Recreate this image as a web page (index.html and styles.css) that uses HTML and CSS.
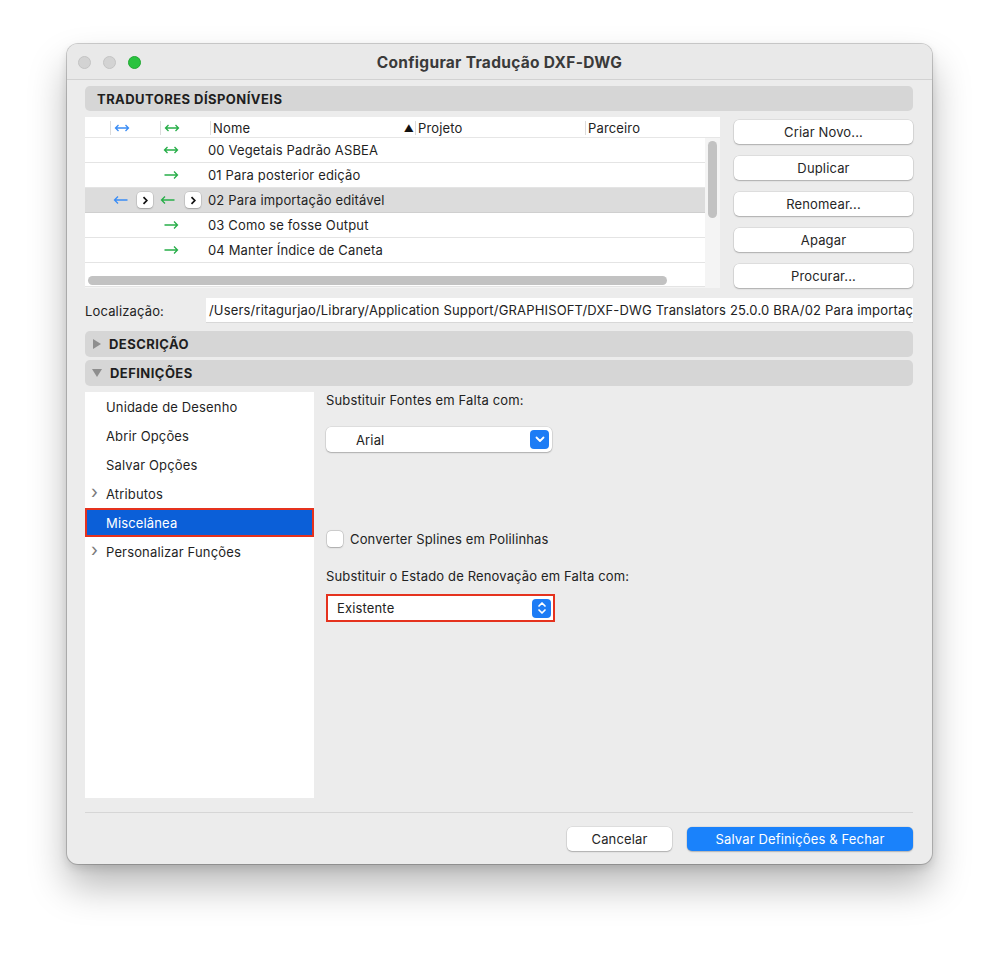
FILE: index.html
```html
<!DOCTYPE html>
<html lang="pt">
<head>
<meta charset="utf-8">
<title>Configurar Tradução DXF-DWG</title>
<link rel="stylesheet" href="styles.css">
</head>
<body>
<div class="window">
  <div class="titlebar">
    <div class="lights">
      <span class="light grey"></span>
      <span class="light grey"></span>
      <span class="light green"></span>
    </div>
    <div class="title">Configurar Tradução DXF-DWG</div>
  </div>
  <div class="content">
    <div class="bar"><span class="bar-text">TRADUTORES DÍSPONÍVEIS</span></div>

    <div class="translators">
      <div class="table">
        <div class="thead">
          <div class="th"></div>
          <div class="th"><span class="sep"></span>
            <svg class="arr" width="16" height="10" viewBox="0 0 16 10"><path d="M1.5 5H14.5M4.5 2L1.5 5L4.5 8M11.5 2L14.5 5L11.5 8" stroke="#3a8cf5" stroke-width="1.3" fill="none"/></svg>
          </div>
          <div class="th"><span class="sep"></span>
            <svg class="arr" width="16" height="10" viewBox="0 0 16 10"><path d="M1.5 5H14.5M4.5 2L1.5 5L4.5 8M11.5 2L14.5 5L11.5 8" stroke="#27ae48" stroke-width="1.3" fill="none"/></svg>
          </div>
          <div class="th th-name"><span class="sep"></span><span class="lbl">Nome</span><span class="sort">▲</span></div>
          <div class="th"><span class="sep"></span><span class="lbl">Projeto</span></div>
          <div class="th"><span class="sep"></span><span class="lbl">Parceiro</span></div>
        </div>

        <div class="row">
          <div></div><div></div>
          <div class="cell"><svg class="arr" width="16" height="10" viewBox="0 0 16 10"><path d="M1.5 5H14.5M4.5 2L1.5 5L4.5 8M11.5 2L14.5 5L11.5 8" stroke="#27ae48" stroke-width="1.3" fill="none"/></svg></div>
          <div class="name">00 Vegetais Padrão ASBEA</div><div></div><div></div>
        </div>
        <div class="row">
          <div></div><div></div>
          <div class="cell"><svg class="arr" width="16" height="10" viewBox="0 0 16 10"><path d="M1.5 5H14.5M11 1.5L14.5 5L11 8.5" stroke="#27ae48" stroke-width="1.3" fill="none"/></svg></div>
          <div class="name">01 Para posterior edição</div><div></div><div></div>
        </div>
        <div class="row selected">
          <div></div>
          <div class="cell"><svg class="arr" width="16" height="10" viewBox="0 0 16 10"><path d="M14.5 5H1.5M5 1.5L1.5 5L5 8.5" stroke="#3a8cf5" stroke-width="1.3" fill="none"/></svg><span class="chev">
            <svg width="8" height="9" viewBox="0 0 8 9"><path d="M2.5 1.2L5.8 4.5L2.5 7.8" stroke="#111" stroke-width="1.7" fill="none"/></svg></span></div>
          <div class="cell cell-b"><svg class="arr" width="16" height="10" viewBox="0 0 16 10"><path d="M14.5 5H1.5M5 1.5L1.5 5L5 8.5" stroke="#27ae48" stroke-width="1.3" fill="none"/></svg><span class="chev">
            <svg width="8" height="9" viewBox="0 0 8 9"><path d="M2.5 1.2L5.8 4.5L2.5 7.8" stroke="#111" stroke-width="1.7" fill="none"/></svg></span></div>
          <div class="name">02 Para importação editável</div><div></div><div></div>
        </div>
        <div class="row">
          <div></div><div></div>
          <div class="cell"><svg class="arr" width="16" height="10" viewBox="0 0 16 10"><path d="M1.5 5H14.5M11 1.5L14.5 5L11 8.5" stroke="#27ae48" stroke-width="1.3" fill="none"/></svg></div>
          <div class="name">03 Como se fosse Output</div><div></div><div></div>
        </div>
        <div class="row">
          <div></div><div></div>
          <div class="cell"><svg class="arr" width="16" height="10" viewBox="0 0 16 10"><path d="M1.5 5H14.5M11 1.5L14.5 5L11 8.5" stroke="#27ae48" stroke-width="1.3" fill="none"/></svg></div>
          <div class="name">04 Manter Índice de Caneta</div><div></div><div></div>
        </div>
        <div class="row row-partial"></div>

        <div class="vscroll"></div>
        <div class="hscroll"></div>
      </div>

      <div class="side-buttons">
        <button class="btn">Criar Novo...</button>
        <button class="btn">Duplicar</button>
        <button class="btn">Renomear...</button>
        <button class="btn">Apagar</button>
        <button class="btn">Procurar...</button>
      </div>
    </div>

    <div class="location">
      <span class="loc-label">Localização:</span>
      <div class="loc-field"><span class="loc-text">/Users/ritagurjao/Library/Application Support/GRAPHISOFT/DXF-DWG Translators 25.0.0 BRA/02 Para importação editável</span></div>
    </div>

    <div class="bar bar-disc bar-desc"><span class="tri tri-right"></span><span class="bar-text">DESCRIÇÃO</span></div>
    <div class="bar bar-disc bar-defs"><span class="tri tri-down"></span><span class="bar-text">DEFINIÇÕES</span></div>

    <div class="settings">
      <ul class="nav">
        <li class="nav-item">Unidade de Desenho</li>
        <li class="nav-item">Abrir Opções</li>
        <li class="nav-item">Salvar Opções</li>
        <li class="nav-item has-children"><span class="nav-chev">›</span>Atributos</li>
        <li class="nav-item active">Miscelânea</li>
        <li class="nav-item has-children"><span class="nav-chev">›</span>Personalizar Funções</li>
      </ul>

      <div class="panel">
        <div class="label">Substituir Fontes em Falta com:</div>
        <div class="popup popup-font">
          <span class="popup-text">Arial</span>
          <span class="popup-btn">
            <svg width="10" height="7" viewBox="0 0 10 7"><path d="M1.5 1.5L5 5L8.5 1.5" stroke="#fff" stroke-width="1.8" fill="none" stroke-linecap="round" stroke-linejoin="round"/></svg>
          </span>
        </div>

        <label class="check-row"><span class="checkbox"></span>Converter Splines em Polilinhas</label>

        <div class="label label-2">Substituir o Estado de Renovação em Falta com:</div>
        <div class="popup-outline">
          <div class="popup popup-state">
            <span class="popup-text">Existente</span>
            <span class="popup-btn">
              <svg width="10" height="14" viewBox="0 0 10 14"><path d="M2 5L5 2L8 5M2 9L5 12L8 9" stroke="#fff" stroke-width="1.7" fill="none" stroke-linecap="round" stroke-linejoin="round"/></svg>
            </span>
          </div>
        </div>
      </div>
    </div>

    <div class="footer">
      <button class="btn btn-cancel">Cancelar</button>
      <button class="btn btn-primary">Salvar Definições &amp; Fechar</button>
    </div>
  </div>
</div>
</body>
</html>
```

FILE: styles.css
```css
* { box-sizing: border-box; }

html, body {
  margin: 0;
  padding: 0;
  background: #ffffff;
}

body {
  font-family: Inter, "Noto Sans", "Liberation Sans", sans-serif;
  font-size: 13px;
  letter-spacing: 0.15px;
  color: #222;
  width: 999px;
  height: 953px;
  overflow: hidden;
}

.window {
  margin: 44px 0 0 67px;
  width: 865px;
  height: 820px;
  background: #ececec;
  border-radius: 11px;
  box-shadow: 0 0 0 1px rgba(0,0,0,0.18), 0 22px 38px rgba(0,0,0,0.28), 0 4px 10px rgba(0,0,0,0.12);
  overflow: hidden;
}

.titlebar {
  height: 36px;
  display: flex;
  align-items: center;
  border-bottom: 1px solid #d2d2d2;
  background: #e9e9e9;
}

.lights {
  display: flex;
  gap: 12px;
  padding-left: 11px;
  width: 120px;
  margin-top: 1px;
}

.light {
  width: 13px;
  height: 13px;
  border-radius: 50%;
  display: block;
}

.light.grey { background: #d3d3d3; border: 0.5px solid #c4c4c4; }
.light.green { background: #29c33f; border: 0.5px solid #22a834; }

.title {
  flex: 1;
  text-align: center;
  padding-right: 120px;
  font-weight: 700;
  font-size: 15.5px;
  letter-spacing: 0.3px;
  color: #3a3a3a;
  margin-top: 1px;
}

.content {
  padding: 0 19px 0 18px;
}

.bar {
  height: 25px;
  margin-top: 6px;
  background: #d6d6d6;
  border-radius: 5px;
  display: flex;
  align-items: center;
  padding-left: 12px;
  font-weight: 700;
  font-size: 13px;
  color: #1e1e1e;
}

.bar-text { letter-spacing: 0.45px; }

/* translators */
.translators {
  display: flex;
  margin-top: 6px;
}

.table {
  position: relative;
  width: 635px;
  height: 171px;
  background: #f4f4f4;
  overflow: hidden;
}

.thead, .row {
  display: grid;
  grid-template-columns: 25px 50px 50px 205px 170px 120px;
  width: 620px;
  background: #fff;
}

.thead {
  height: 21px;
  border-bottom: 1px solid #e6e6e6;
  align-items: center;
  width: 635px;
  grid-template-columns: 25px 50px 50px 205px 170px 135px;
}

.th {
  display: flex;
  align-items: center;
  height: 21px;
}

.sep {
  display: inline-block;
  width: 1px;
  height: 14px;
  background: #dcdcdc;
  margin-right: 2px;
}

.th .arr { margin-left: 1px; }
.th-name .lbl { flex: 1; }
.sort { font-size: 10px; margin-right: 1px; color: #111; }

.row {
  height: 25px;
  border-bottom: 1px solid #e4e4e4;
  align-items: center;
}

.row.selected { background: #dcdcdc; border-bottom-color: #cfcfcf; }
.row-partial { height: 24px; }

.cell {
  display: flex;
  align-items: center;
  padding-left: 3px;
}

.cell-b { padding-left: 0; }
.cell-b .chev { margin-left: 9px; }

.chev {
  width: 16px;
  height: 16px;
  border-radius: 4px;
  background: #fff;
  box-shadow: 0 0 0 0.5px rgba(0,0,0,0.15), 0 1px 1.5px rgba(0,0,0,0.2);
  display: flex;
  align-items: center;
  justify-content: center;
  margin-left: 8px;
}

.name {
  margin-left: -2px;
  white-space: nowrap;
  color: #1f1f1f;
}

.vscroll {
  position: absolute;
  left: 623px;
  top: 24px;
  width: 9px;
  height: 77px;
  border-radius: 5px;
  background: #c2c2c2;
}

.hscroll {
  position: absolute;
  left: 3px;
  top: 159px;
  width: 579px;
  height: 9px;
  border-radius: 5px;
  background: #c2c2c2;
}

.side-buttons {
  margin-left: 14px;
  width: 179px;
  display: flex;
  flex-direction: column;
  gap: 12px;
  padding-top: 3px;
}

.btn {
  font-family: inherit;
  font-size: 13px;
  letter-spacing: 0.15px;
  color: #262626;
  height: 24px;
  border: none;
  border-radius: 5px;
  background: #fff;
  box-shadow: 0 0 0 0.5px rgba(0,0,0,0.12), 0 1px 1.5px rgba(0,0,0,0.22);
  padding: 0;
}

/* location */
.location {
  display: flex;
  align-items: center;
  margin-top: 10px;
  height: 25px;
}

.loc-label { width: 121px; flex: none; }

.loc-field {
  flex: 1;
  height: 25px;
  background: #fff;
  border-bottom: 1px solid #d8d8d8;
  display: flex;
  align-items: center;
  padding-left: 3px;
  white-space: nowrap;
  overflow: hidden;
  min-width: 0;
}

.loc-text { letter-spacing: 0.17px; }

.bar-disc { padding-left: 7px; height: 26px; }
.bar-desc { margin-top: 8px; }
.bar-defs { margin-top: 3px; }

.tri {
  display: inline-block;
  width: 0;
  height: 0;
  margin-right: 8px;
}

.tri-right {
  border-top: 5px solid transparent;
  border-bottom: 5px solid transparent;
  border-left: 8px solid #8e8e8e;
  margin-left: 1px;
}

.tri-down {
  border-left: 5px solid transparent;
  border-right: 5px solid transparent;
  border-top: 8px solid #8e8e8e;
}

/* settings */
.settings {
  display: flex;
  margin-top: 6px;
  height: 406px;
}

.nav {
  list-style: none;
  margin: 0;
  padding: 0;
  width: 229px;
  height: 406px;
  background: #fff;
  flex: none;
}

.nav-item {
  height: 29px;
  display: flex;
  align-items: center;
  padding-left: 21px;
  position: relative;
  color: #1f1f1f;
}

.nav-chev {
  position: absolute;
  left: 6px;
  top: 4px;
  font-size: 18px;
  color: #7a7a7a;
  line-height: 18px;
}

.nav-item.active {
  background: #0b5fd8;
  color: #fff;
  box-shadow: inset 0 0 0 2px #e5321e;
}

.panel {
  padding-left: 12px;
  flex: 1;
}

.label {
  height: 16px;
  line-height: 16px;
}

.popup {
  background: #fff;
  border-radius: 5px;
  box-shadow: 0 0 0 0.5px rgba(0,0,0,0.12), 0 1px 1.5px rgba(0,0,0,0.22);
  display: flex;
  align-items: center;
  justify-content: space-between;
}

.popup-font {
  width: 226px;
  height: 25px;
  margin-top: 19px;
  padding: 0 3px 0 30px;
}

.popup-btn {
  width: 19px;
  height: 19px;
  border-radius: 4px;
  background: #1d7cf5;
  display: flex;
  align-items: center;
  justify-content: center;
}

.check-row {
  display: flex;
  align-items: center;
  margin-top: 78px;
  height: 17px;
}

.checkbox {
  width: 16px;
  height: 16px;
  border-radius: 4px;
  background: #fff;
  box-shadow: 0 0 0 0.5px rgba(0,0,0,0.2), 0 0.5px 1.5px rgba(0,0,0,0.2);
  margin: 0 7px 0 1px;
}

.label-2 { margin-top: 21px; }

.popup-outline {
  margin-top: 10px;
  width: 229px;
  height: 28px;
  border: 2px solid #e5321e;
  background: #fff;
}

.popup-state {
  height: 24px;
  padding: 0 2px 0 9px;
  box-shadow: none;
  border-radius: 0;
}

/* footer */
.footer {
  margin-top: 14px;
  border-top: 1px solid #d6d6d6;
  padding-top: 14px;
  display: flex;
  justify-content: flex-end;
  gap: 15px;
}

.btn-cancel { width: 105px; }

.btn-primary {
  width: 226px;
  background: #1a82fb;
  color: #fff;
  box-shadow: 0 0 0 0.5px rgba(0,0,0,0.1), 0 1px 1.5px rgba(0,0,0,0.2);
}
```
